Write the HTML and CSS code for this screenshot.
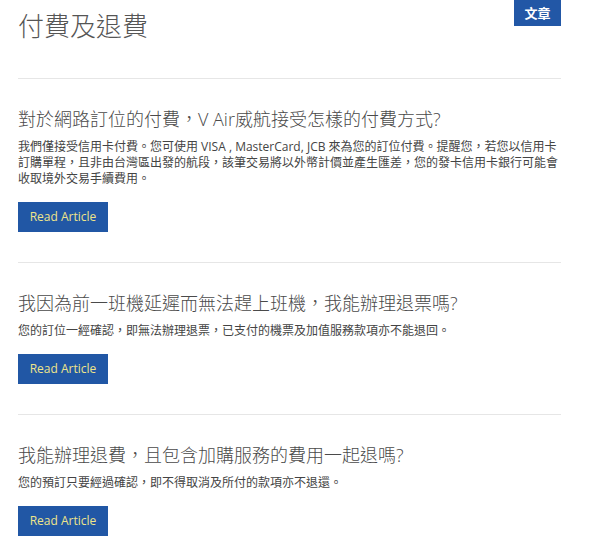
FILE: index.html
```html
<!DOCTYPE html>
<html lang="zh-Hant">
<head>
    <meta charset="UTF-8">
    <meta name="viewport" content="width=device-width, initial-scale=1.0">
    <title>付費及退費</title>
    <link rel="stylesheet" href="styles.css">
</head>
<body>
    <div id="faq-container">
        <div class="faq-header">
            <h1 class="faq-title">付費及退費</h1>
            <span class="faq-tag">文章</span>
        </div>

        <div class="faq-item">
            <h2 class="faq-question">對於網路訂位的付費，V Air威航接受怎樣的付費方式?</h2>
            <p class="faq-answer">我們僅接受信用卡付費。您可使用 VISA , MasterCard, JCB 來為您的訂位付費。提醒您，若您以信用卡訂購單程，且非由台灣區出發的航段，該筆交易將以外幣計價並產生匯差，您的發卡信用卡銀行可能會收取境外交易手續費用。</p>
            <a class="read-button" href="#">Read Article</a>
        </div>

        <div class="faq-item">
            <h2 class="faq-question">我因為前一班機延遲而無法趕上班機，我能辦理退票嗎?</h2>
            <p class="faq-answer">您的訂位一經確認，即無法辦理退票，已支付的機票及加值服務款項亦不能退回。</p>
            <a class="read-button" href="#">Read Article</a>
        </div>

        <div class="faq-item">
            <h2 class="faq-question">我能辦理退費，且包含加購服務的費用一起退嗎?</h2>
            <p class="faq-answer">您的預訂只要經過確認，即不得取消及所付的款項亦不退還。</p>
            <a class="read-button" href="#">Read Article</a>
        </div>
    </div>
</body>
</html>
```

FILE: styles.css
```css
body {
    margin: 0;
    background: #fff;
    font-family: "Open Sans", "Noto Sans CJK TC", sans-serif;
}

#faq-container {
    width: 543px;
    margin-left: 18px;
}

.faq-header {
    display: flex;
    justify-content: space-between;
    align-items: flex-start;
    border-bottom: 1px solid #e6e6e6;
}

.faq-title {
    margin: 8px 0 34px 0;
    font-size: 26px;
    line-height: 36px;
    font-weight: 300;
    color: #555;
}

.faq-tag {
    width: 47px;
    height: 26px;
    line-height: 26px;
    text-align: center;
    background: #2257a6;
    color: #fff;
    font-size: 13px;
    font-weight: bold;
}

.faq-item {
    padding: 28px 0 30px 0;
    border-bottom: 1px solid #e6e6e6;
}

.faq-item:last-child {
    border-bottom: none;
}

.faq-question {
    margin: 0 0 8px 0;
    font-size: 18px;
    line-height: 24px;
    font-weight: 300;
    color: #4a4a4a;
}

.faq-answer {
    margin: 0 0 15px 0;
    font-size: 12px;
    line-height: 16px;
    color: #444;
}

.read-button {
    display: block;
    width: 90px;
    height: 30px;
    line-height: 30px;
    text-align: center;
    background: #2157a5;
    color: #efe58a;
    font-size: 12px;
    text-decoration: none;
}
```
